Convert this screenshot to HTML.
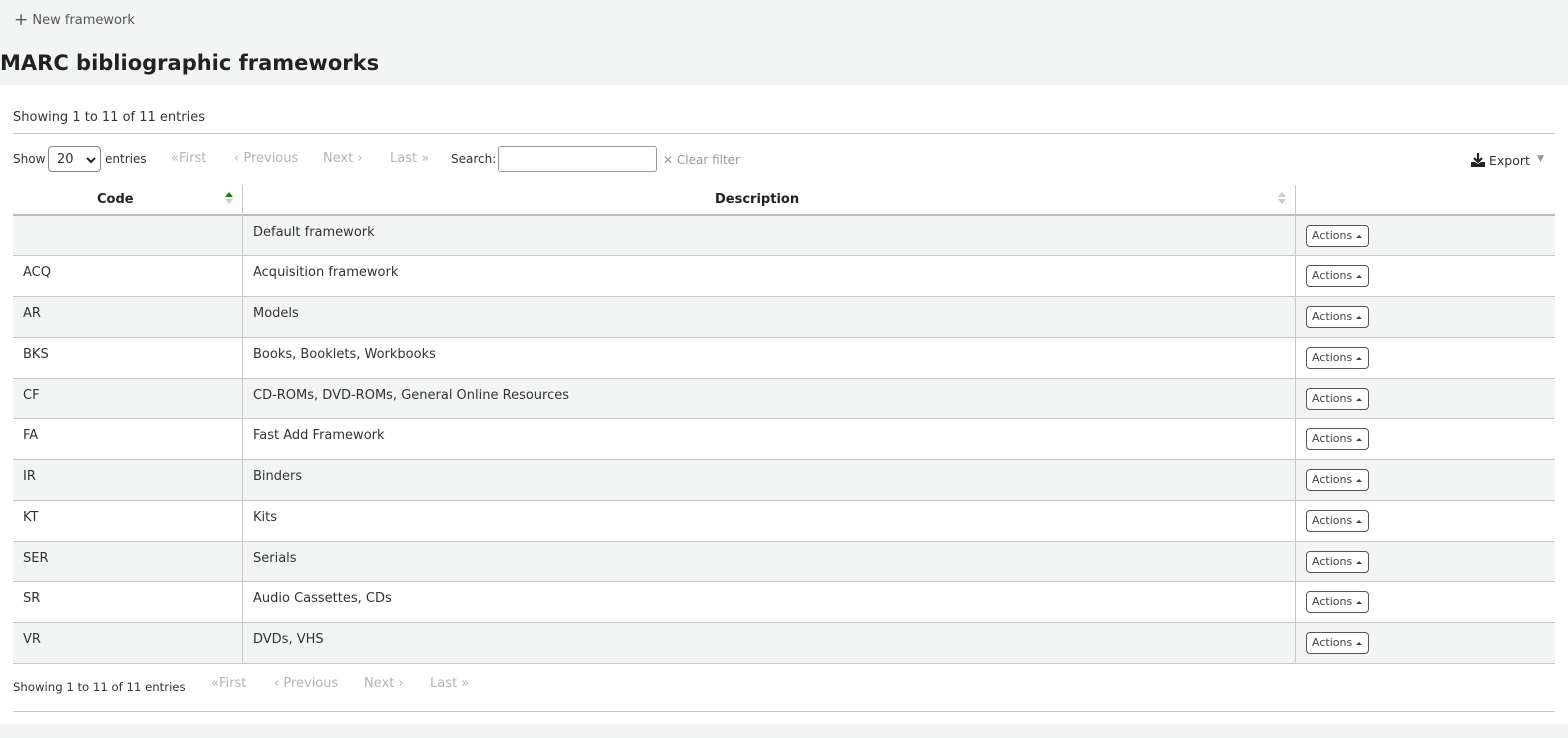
<!DOCTYPE html>
<html><head><meta charset="utf-8">
<style>
*{box-sizing:border-box;margin:0;padding:0}
body{width:1568px;height:738px;background:#f3f4f4;font-family:"DejaVu Sans","Liberation Sans",sans-serif;color:#333;font-size:13px;position:relative;overflow:hidden}
.a{position:absolute;white-space:nowrap}
.g{color:#b4b4b4}
.row{position:absolute;left:13px;width:1542px;border-bottom:1px solid #c8c8c8}
.row .c1{position:absolute;left:10px;top:9px}
.row .c2{position:absolute;left:240px;top:9px}
.row .vl{position:absolute;left:229px;top:0;bottom:0;border-left:1px solid #c8c8c8}
.row .vr{position:absolute;left:1282px;top:0;bottom:0;border-left:1px solid #c8c8c8}
.btn{position:absolute;left:1293px;width:63px;height:22px;border:1px solid #555;border-radius:4px;background:#fff;font-size:11px;line-height:20px;padding-left:5px;color:#444}
.btn:after{content:"";position:absolute;right:6px;top:9px;border-left:3px solid transparent;border-right:3px solid transparent;border-bottom:3px solid #444}
</style></head><body>
<div class="a" style="left:14px;top:9px;font-size:13px;color:#555"><span style="font-size:17px;color:#555;position:relative;top:1px">+</span> New framework</div>
<div class="a" style="left:0;top:51px;font-size:21px;font-weight:bold;color:#222">MARC bibliographic frameworks</div>
<div style="position:absolute;left:0;top:85px;width:1568px;height:639px;background:#fff"></div>
<div class="a" style="left:13px;top:110px">Showing 1 to 11 of 11 entries</div>
<div style="position:absolute;left:13px;top:133px;width:1542px;border-top:1px solid #c8c8c8"></div>
<div class="a" style="left:13px;top:152px;font-size:12px">Show</div>
<div class="a" style="left:48px;top:146px;width:53px;height:26px;border:1px solid #888;border-radius:4px;padding:5px 0 0 8px">20<svg style="position:absolute;right:4px;top:9px" width="10" height="8" viewBox="0 0 10 8"><path d="M1 2l4 4 4-4" fill="none" stroke="#222" stroke-width="2"/></svg></div>
<div class="a" style="left:105px;top:152px;font-size:12px">entries</div>
<div class="a g" style="left:171px;top:151px">«First</div>
<div class="a g" style="left:234px;top:151px">‹ Previous</div>
<div class="a g" style="left:323px;top:151px">Next ›</div>
<div class="a g" style="left:390px;top:151px">Last »</div>
<div class="a" style="left:451px;top:152px;font-size:12px">Search:</div>
<div class="a" style="left:498px;top:146px;width:159px;height:26px;border:1px solid #999;border-radius:3px"></div>
<div class="a" style="left:663px;top:153px;color:#999;font-size:12px">✕ Clear filter</div>
<svg class="a" style="left:1470px;top:153px" width="16" height="14" viewBox="0 0 16 14"><path d="M8 0v8M4 5l4 4 4-4" fill="none" stroke="#222" stroke-width="2.2"/><path d="M1 9h4l3 2 3-2h4v5H1z" fill="#222"/></svg>
<div class="a" style="left:1489px;top:153px;font-size:12.5px">Export</div>
<div class="a" style="left:1537px;top:154px;font-size:9px;color:#999">▼</div>
<div style="position:absolute;left:13px;top:185px;width:1542px;height:31px;border-bottom:2px solid #bbb"></div>
<div style="position:absolute;left:242px;top:185px;height:30px;border-left:1px solid #c8c8c8"></div>
<div style="position:absolute;left:1295px;top:185px;height:30px;border-left:1px solid #c8c8c8"></div>
<div class="a" style="left:97px;top:192px;font-weight:bold;color:#222">Code</div>
<div class="a" style="left:715px;top:192px;font-weight:bold;color:#222">Description</div>
<svg class="a" style="left:225px;top:192px" width="8" height="12"><path d="M0 5h8L4 0z" fill="#1a7a1a"/><path d="M0 7h8L4 12z" fill="#ccc"/></svg>
<svg class="a" style="left:1278px;top:192px" width="8" height="12"><path d="M0 5h8L4 0z" fill="#ccc"/><path d="M0 7h8L4 12z" fill="#ccc"/></svg>
<div class="row" style="top:216px;height:40px;background:#f3f4f4"><div class="vl"></div><div class="vr"></div><div class="c1"></div><div class="c2">Default framework</div><div class="btn" style="top:9px">Actions</div></div>
<div class="row" style="top:256px;height:41px"><div class="vl"></div><div class="vr"></div><div class="c1">ACQ</div><div class="c2">Acquisition framework</div><div class="btn" style="top:9px">Actions</div></div>
<div class="row" style="top:297px;height:41px;background:#f3f4f4"><div class="vl"></div><div class="vr"></div><div class="c1">AR</div><div class="c2">Models</div><div class="btn" style="top:9px">Actions</div></div>
<div class="row" style="top:338px;height:41px"><div class="vl"></div><div class="vr"></div><div class="c1">BKS</div><div class="c2">Books, Booklets, Workbooks</div><div class="btn" style="top:9px">Actions</div></div>
<div class="row" style="top:379px;height:40px;background:#f3f4f4"><div class="vl"></div><div class="vr"></div><div class="c1">CF</div><div class="c2">CD-ROMs, DVD-ROMs, General Online Resources</div><div class="btn" style="top:9px">Actions</div></div>
<div class="row" style="top:419px;height:41px"><div class="vl"></div><div class="vr"></div><div class="c1">FA</div><div class="c2">Fast Add Framework</div><div class="btn" style="top:9px">Actions</div></div>
<div class="row" style="top:460px;height:41px;background:#f3f4f4"><div class="vl"></div><div class="vr"></div><div class="c1">IR</div><div class="c2">Binders</div><div class="btn" style="top:9px">Actions</div></div>
<div class="row" style="top:501px;height:41px"><div class="vl"></div><div class="vr"></div><div class="c1">KT</div><div class="c2">Kits</div><div class="btn" style="top:9px">Actions</div></div>
<div class="row" style="top:542px;height:40px;background:#f3f4f4"><div class="vl"></div><div class="vr"></div><div class="c1">SER</div><div class="c2">Serials</div><div class="btn" style="top:9px">Actions</div></div>
<div class="row" style="top:582px;height:41px"><div class="vl"></div><div class="vr"></div><div class="c1">SR</div><div class="c2">Audio Cassettes, CDs</div><div class="btn" style="top:9px">Actions</div></div>
<div class="row" style="top:623px;height:41px;background:#f3f4f4"><div class="vl"></div><div class="vr"></div><div class="c1">VR</div><div class="c2">DVDs, VHS</div><div class="btn" style="top:9px">Actions</div></div>
<div class="a" style="left:13px;top:680px;font-size:11.7px">Showing 1 to 11 of 11 entries</div>
<div class="a g" style="left:211px;top:676px">«First</div>
<div class="a g" style="left:274px;top:676px">‹ Previous</div>
<div class="a g" style="left:364px;top:676px">Next ›</div>
<div class="a g" style="left:430px;top:676px">Last »</div>
<div style="position:absolute;left:13px;top:711px;width:1542px;border-top:1px solid #c8c8c8"></div>
</body></html>
